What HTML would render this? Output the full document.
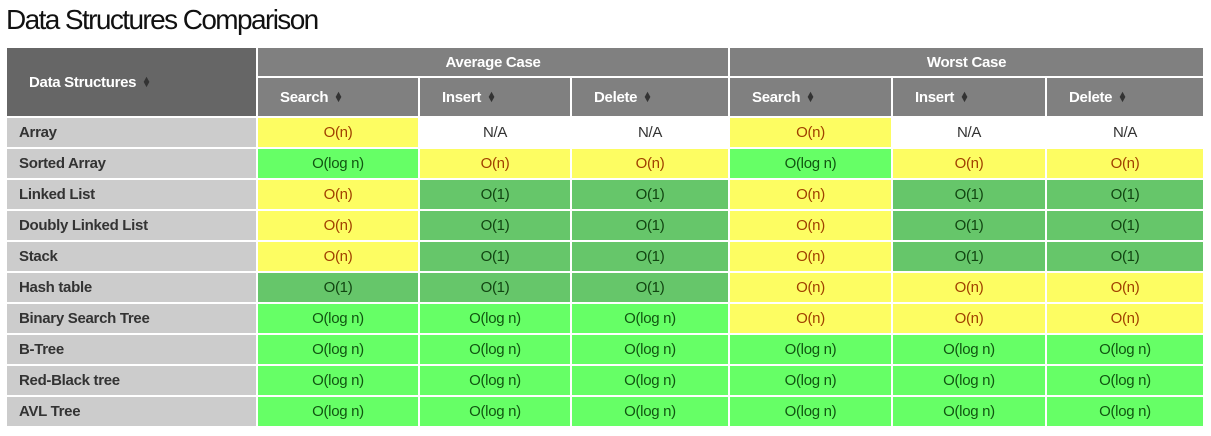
<!DOCTYPE html>
<html><head><meta charset="utf-8"><style>
body{margin:0;background:#fff;font-family:"Liberation Sans",sans-serif;width:1211px;height:436px;overflow:hidden}
h1{position:absolute;left:6px;top:2px;margin:0;font-weight:normal;font-size:28px;letter-spacing:-1.6px;color:#111;line-height:36px}
.g{position:absolute;left:7px;top:48px;display:grid;grid-template-columns:249px 160px 150px 156px 161px 152px 156px;grid-template-rows:28px 38px repeat(10,29px);gap:2px}
.g div{display:flex;align-items:center;justify-content:center;font-size:15px;letter-spacing:-0.3px}
.h{background:#808080;color:#fff;font-weight:bold}
.hs{justify-content:flex-start!important;padding-left:22px}
.d{background:#666;color:#fff;font-weight:bold;grid-row:1/3;justify-content:flex-start!important;padding-left:22px}
.l{background:#ccc;color:#333;font-weight:bold;justify-content:flex-start!important;padding-left:12px}
.y{background:#fdfd62;color:#a04000}
.G{background:#66ff66;color:#115511}
.D{background:#66c66a;color:#114411}
.w{background:#fff;color:#333}
.s{font-size:9px;margin-left:6px;color:#333;line-height:5px;display:inline-block;transform:scaleX(1.1)}
</style></head><body>
<h1>Data Structures Comparison</h1>
<div class="g">
<div class="d">Data Structures<span class="s">▲<br>▼</span></div>
<div class="h" style="grid-column:2/5">Average Case</div>
<div class="h" style="grid-column:5/8">Worst Case</div>
<div class="h hs">Search<span class="s">▲<br>▼</span></div>
<div class="h hs">Insert<span class="s">▲<br>▼</span></div>
<div class="h hs">Delete<span class="s">▲<br>▼</span></div>
<div class="h hs">Search<span class="s">▲<br>▼</span></div>
<div class="h hs">Insert<span class="s">▲<br>▼</span></div>
<div class="h hs">Delete<span class="s">▲<br>▼</span></div>

<div class="l">Array</div><div class="y">O(n)</div><div class="w">N/A</div><div class="w">N/A</div><div class="y">O(n)</div><div class="w">N/A</div><div class="w">N/A</div>
<div class="l">Sorted Array</div><div class="G">O(log n)</div><div class="y">O(n)</div><div class="y">O(n)</div><div class="G">O(log n)</div><div class="y">O(n)</div><div class="y">O(n)</div>
<div class="l">Linked List</div><div class="y">O(n)</div><div class="D">O(1)</div><div class="D">O(1)</div><div class="y">O(n)</div><div class="D">O(1)</div><div class="D">O(1)</div>
<div class="l">Doubly Linked List</div><div class="y">O(n)</div><div class="D">O(1)</div><div class="D">O(1)</div><div class="y">O(n)</div><div class="D">O(1)</div><div class="D">O(1)</div>
<div class="l">Stack</div><div class="y">O(n)</div><div class="D">O(1)</div><div class="D">O(1)</div><div class="y">O(n)</div><div class="D">O(1)</div><div class="D">O(1)</div>
<div class="l">Hash table</div><div class="D">O(1)</div><div class="D">O(1)</div><div class="D">O(1)</div><div class="y">O(n)</div><div class="y">O(n)</div><div class="y">O(n)</div>
<div class="l">Binary Search Tree</div><div class="G">O(log n)</div><div class="G">O(log n)</div><div class="G">O(log n)</div><div class="y">O(n)</div><div class="y">O(n)</div><div class="y">O(n)</div>
<div class="l">B-Tree</div><div class="G">O(log n)</div><div class="G">O(log n)</div><div class="G">O(log n)</div><div class="G">O(log n)</div><div class="G">O(log n)</div><div class="G">O(log n)</div>
<div class="l">Red-Black tree</div><div class="G">O(log n)</div><div class="G">O(log n)</div><div class="G">O(log n)</div><div class="G">O(log n)</div><div class="G">O(log n)</div><div class="G">O(log n)</div>
<div class="l">AVL Tree</div><div class="G">O(log n)</div><div class="G">O(log n)</div><div class="G">O(log n)</div><div class="G">O(log n)</div><div class="G">O(log n)</div><div class="G">O(log n)</div>
</div>
</body></html>
